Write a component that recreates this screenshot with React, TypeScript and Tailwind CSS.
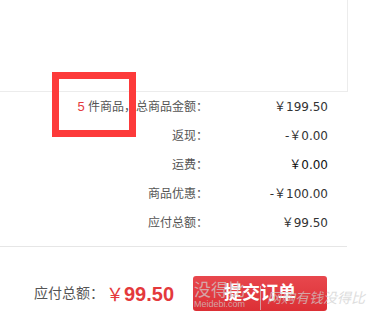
import React from "react";

const rows = [
  { label: "总商品金额：", value: "￥199.50", dark: false, count: true },
  { label: "返现：", value: "-￥0.00", dark: false },
  { label: "运费：", value: "￥0.00", dark: true },
  { label: "商品优惠：", value: "-￥100.00", dark: false },
  { label: "应付总额：", value: "￥99.50", dark: false },
];

export default function App() {
  return (
    <div
      className="relative w-[380px] h-[336px] bg-white overflow-hidden"
      style={{ fontFamily: '"Liberation Sans", "Noto Sans CJK SC", sans-serif' }}
    >
      <div className="h-[92px] w-[348px] border-r border-b border-[#ececec]" />

      <div className="flex flex-col w-[348px]">
        {rows.map((r) => (
          <div key={r.label} className="flex h-[29px] items-center text-[12px]">
            <div className="w-[208px] text-right text-[#555]">
              {r.count && (
                <>
                  <span className="text-[#e4393c] text-[13px]">5</span> 件商品，
                </>
              )}
              {r.label}
            </div>
            <div
              className={`w-[120px] text-right text-[12px] ${r.dark ? "text-[#111]" : "text-[#333]"}`}
              style={{ fontFamily: '"DejaVu Sans", "Noto Sans CJK SC", sans-serif' }}
            >
              {r.value}
            </div>
          </div>
        ))}
      </div>

      <div className="mt-[9px] w-[347px] border-t border-[#e6e6e6]" />

      <div className="flex items-center pt-[29px]">
        <div className="pl-[34px] w-[106px] text-[14px] text-[#555]">应付总额：</div>
        <div className="flex w-[87px] items-baseline font-bold text-[#e4393c]">
          <span
            className="text-[18px] font-normal"
            style={{ fontFamily: '"Noto Sans CJK SC", serif' }}
          >
            ￥
          </span>
          <span className="text-[20px]">99.50</span>
        </div>
        <button className="flex h-[35px] w-[134px] items-center justify-center rounded-[3px] bg-gradient-to-b from-[#e8474d] to-[#dc2f35] text-[18px] font-bold text-white">
          提交订单
        </button>
      </div>

      <div className="pointer-events-none absolute left-[194px] top-[282px] flex items-end gap-[6px] text-[#d0d0d0] opacity-70">
        <div className="flex w-[60px] flex-col leading-none">
          <span className="text-[17px]">没得比</span>
          <span className="text-[9px] leading-[11px]">Meidebi.com</span>
        </div>
        <span className="h-[24px] border-l border-[#ccc]" />
        <span className="pb-[5px] text-[14px] italic leading-none">网购有钱没得比</span>
      </div>

      <div className="absolute left-[52px] top-[72px] h-[65px] w-[84px] border-[7px] border-[#fd3a3a]" />
    </div>
  );
}
